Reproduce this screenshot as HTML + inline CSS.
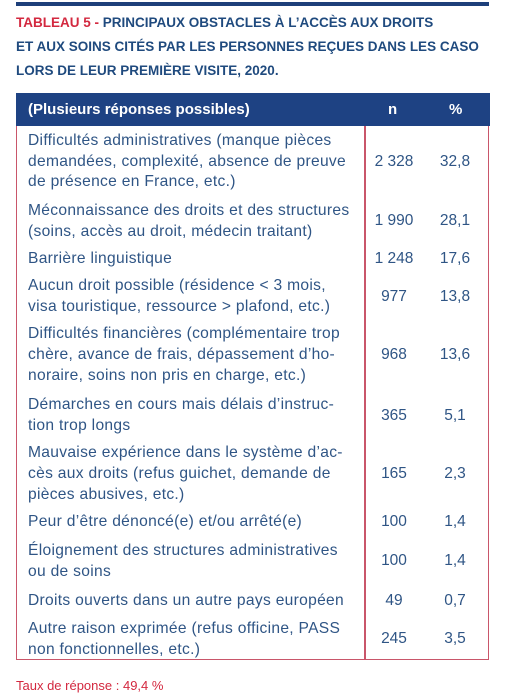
<!DOCTYPE html>
<html><head><meta charset="utf-8"><style>
body{margin:0;width:506px;height:689px;background:#fff;position:relative;overflow:hidden;font-family:"Liberation Sans",sans-serif;}
.rule{position:absolute;left:16px;top:2px;width:473px;height:4px;background:#1d3f7a;}
.title{position:absolute;left:16px;top:11px;font-weight:bold;font-size:13.5px;line-height:24px;color:#1f4a7e;white-space:nowrap;}
.title span{color:#d3283f;}
.box{position:absolute;left:16px;top:93px;width:471px;height:566px;border:1.5px solid #c9566a;border-top:none;}
.head{position:absolute;left:16px;top:93px;width:474px;height:33px;background:#1e4283;color:#fff;font-weight:bold;font-size:15px;}
.vl{position:absolute;left:364px;top:126px;width:1.5px;height:534px;background:#c9566a;}
.r{position:absolute;left:28px;font-size:15.6px;letter-spacing:0.3px;line-height:21px;color:#2f5585;white-space:nowrap;}
.n{position:absolute;left:366px;width:56px;text-align:center;font-size:15.5px;color:#2f5585;}
.p{position:absolute;left:424px;width:62px;text-align:center;font-size:15.5px;color:#2f5585;}
.foot{position:absolute;left:16px;top:678px;font-size:13px;color:#d3283f;}
</style></head><body>
<div class="rule"></div>
<div class="title"><span>TABLEAU 5 - </span>PRINCIPAUX OBSTACLES À L’ACCÈS AUX DROITS<br>ET AUX SOINS CITÉS PAR LES PERSONNES REÇUES DANS LES CASO<br>LORS DE LEUR PREMIÈRE VISITE, 2020.</div>
<div class="box"></div>
<div class="head"><div style="position:absolute;left:12px;top:8px">(Plusieurs réponses possibles)</div><div style="position:absolute;left:372px;top:8px">n</div><div style="position:absolute;left:433px;top:8px">%</div></div>
<div class="vl"></div>

<div class="r" style="top:131px;line-height:20.5px">Difficultés administratives (manque pièces<br>demandées, complexité, absence de preuve<br>de présence en France, etc.)</div>
<div class="n" style="top:153px">2 328</div><div class="p" style="top:153px">32,8</div>

<div class="r" style="top:200px">Méconnaissance des droits et des structures<br>(soins, accès au droit, médecin traitant)</div>
<div class="n" style="top:212px">1 990</div><div class="p" style="top:212px">28,1</div>

<div class="r" style="top:248px">Barrière linguistique</div>
<div class="n" style="top:250px">1 248</div><div class="p" style="top:250px">17,6</div>

<div class="r" style="top:275px">Aucun droit possible (résidence &lt; 3 mois,<br>visa touristique, ressource &gt; plafond, etc.)</div>
<div class="n" style="top:288px">977</div><div class="p" style="top:288px">13,8</div>

<div class="r" style="top:323px">Difficultés financières (complémentaire trop<br>chère, avance de frais, dépassement d’ho-<br>noraire, soins non pris en charge, etc.)</div>
<div class="n" style="top:346px">968</div><div class="p" style="top:346px">13,6</div>

<div class="r" style="top:394px">Démarches en cours mais délais d’instruc-<br>tion trop longs</div>
<div class="n" style="top:407px">365</div><div class="p" style="top:407px">5,1</div>

<div class="r" style="top:442px">Mauvaise expérience dans le système d’ac-<br>cès aux droits (refus guichet, demande de<br>pièces abusives, etc.)</div>
<div class="n" style="top:465px">165</div><div class="p" style="top:465px">2,3</div>

<div class="r" style="top:511px">Peur d’être dénoncé(e) et/ou arrêté(e)</div>
<div class="n" style="top:513px">100</div><div class="p" style="top:513px">1,4</div>

<div class="r" style="top:540px">Éloignement des structures administratives<br>ou de soins</div>
<div class="n" style="top:552px">100</div><div class="p" style="top:552px">1,4</div>

<div class="r" style="top:590px">Droits ouverts dans un autre pays européen</div>
<div class="n" style="top:592px">49</div><div class="p" style="top:592px">0,7</div>

<div class="r" style="top:618px">Autre raison exprimée (refus officine, PASS<br>non fonctionnelles, etc.)</div>
<div class="n" style="top:630px">245</div><div class="p" style="top:630px">3,5</div>

<div class="foot">Taux de réponse : 49,4 %</div>
</body></html>
